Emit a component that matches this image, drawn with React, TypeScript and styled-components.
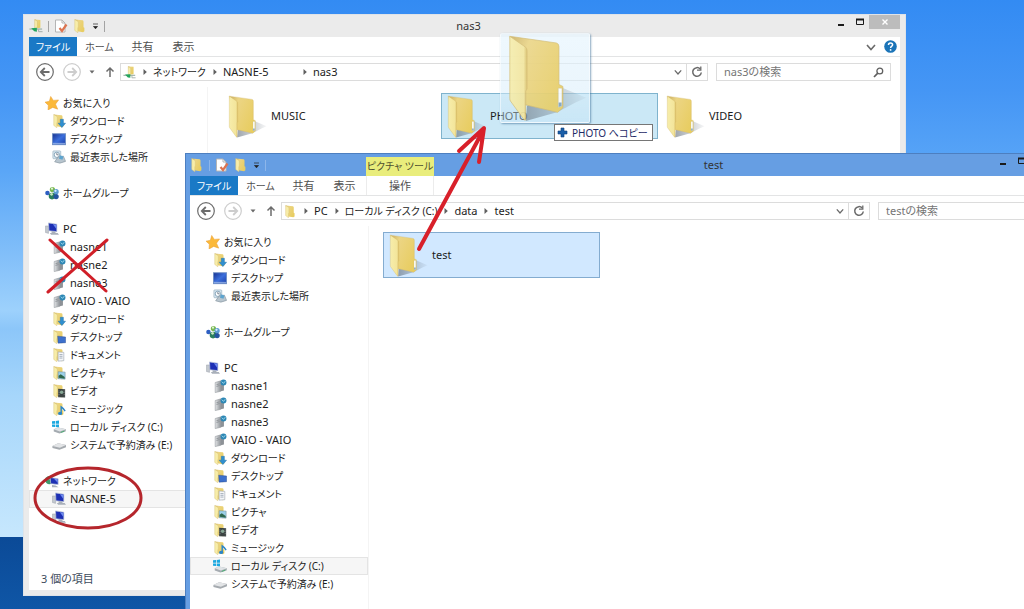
import React from "react";
import styled, { createGlobalStyle, css } from "styled-components";

const GlobalStyle = createGlobalStyle`
  * { box-sizing: border-box; }
  body {
    margin: 0;
    font-family: "Noto Sans", "Noto Sans CJK JP", sans-serif;
    font-feature-settings: "palt";
    font-size: 11px;
    line-height: 18px;
    color: #1c1c1c;
  }
  button, input {
    font: inherit;
    font-feature-settings: inherit;
    color: inherit;
    background: none;
    border: 0;
    padding: 0;
    margin: 0;
  }
`;

type Tone = "idle" | "active";

const Desktop = styled.main`
  position: relative;
  height: 100vh;
  overflow: hidden;
  background:
    linear-gradient(#0b4a97, #0f56a6) bottom / 100% 72px no-repeat,
    linear-gradient(#338bf3 0%, #4596f5 15%, #5aa6f7 28%, #82bff9 42%, #9dd1fc 51%, #8cc6f9 54%, #a6d6fb 65%, #c6e7fd 88%);
`;

const Window = styled.section<{ $tone: Tone }>`
  position: absolute;
  display: flex;
  flex-direction: column;
  ${(p) =>
    p.$tone === "active"
      ? css`
          left: 185px;
          top: 153px;
          right: -44px;
          min-height: 100%;
          background: #669ee3;
          border: 1px solid #4d7fc0;
          padding: 0 5px 5px 4px;
        `
      : css`
          left: 23px;
          top: 14px;
          right: 118px;
          background: #ebebeb;
          border: 1px solid #dfe3e8;
          padding: 0 5px 5px;
        `}
`;

const TitleBar = styled.header`
  display: flex;
  height: 22px;
`;

const QuickAccess = styled.div<{ $wide?: boolean }>`
  display: flex;
  align-items: center;
  gap: 5px;
  width: ${(p) => (p.$wide ? "176px" : "77px")};
`;

const IconButton = styled.button`
  display: grid;
  place-items: center;
  flex: none;
`;

const Rule = styled.span<{ $tone: Tone }>`
  width: 1px;
  height: 11px;
  background: ${(p) => (p.$tone === "active" ? "#8db6ea" : "#a3a3a3")};
`;

const ContextTitle = styled.div`
  width: 68px;
  margin-top: 3px;
  background: #e9ed7c;
  color: #4e5030;
  text-align: center;
  white-space: nowrap;
`;

const Title = styled.h1`
  flex: 1;
  margin: 0;
  padding-top: 2px;
  font-size: 11px;
  font-weight: 400;
  text-align: center;
  color: #333;
`;

const Controls = styled.div`
  display: flex;
  align-items: flex-start;
`;

const Control = styled.button<{ $close?: boolean; $tone: Tone }>`
  display: grid;
  place-items: center;
  width: ${(p) => (p.$close ? "31px" : "19px")};
  height: 14px;
  background: ${(p) => (p.$close ? (p.$tone === "active" ? "#c75050" : "#bcbcbc") : "none")};
`;

const Client = styled.div`
  flex: 1;
  display: flex;
  flex-direction: column;
  background: #fff;
`;

const Tabs = styled.nav`
  display: flex;
  height: 20px;
  border-bottom: 1px solid #e3e4e5;
`;

const Tab = styled.button<{ $file?: boolean; $w: number }>`
  width: ${(p) => p.$w}px;
  height: 19px;
  color: ${(p) => (p.$file ? "#fff" : "#505050")};
  background: ${(p) => (p.$file ? "#1a79c6" : "none")};
`;

const ContextTab = styled(Tab)`
  margin-left: 1px;
  border-left: 1px solid #ececec;
  border-right: 1px solid #ececec;
`;

const TabsEnd = styled.div`
  display: flex;
  align-items: center;
  gap: 8px;
  margin-left: auto;
  padding-right: 3px;
`;

const AddressRow = styled.div`
  display: flex;
  align-items: center;
  height: 30px;
  padding: 0 9px 0 6px;
`;

const NavButtons = styled.div`
  display: flex;
  align-items: center;
  width: 85px;
`;

const ForwardButton = styled(IconButton)`
  margin-left: 7px;
`;

const AddressBox = styled.div`
  flex: 1;
  display: flex;
  align-items: center;
  height: 18px;
  padding-left: 2px;
  border: 1px solid #dcdcdc;
`;

const Crumbs = styled.ol`
  flex: 1;
  display: flex;
  align-items: center;
  margin: 0;
  padding: 0;
  list-style: none;
  white-space: nowrap;
`;

const Crumb = styled.li<{ $w?: number }>`
  display: flex;
  align-items: center;
  line-height: 16px;
  ${(p) => p.$w && `min-width: ${p.$w}px;`}
  & > svg { margin: 0 5px 0 6px; flex: none; }
`;

const Refresh = styled(IconButton)`
  width: 21px;
  height: 16px;
  margin-left: 4px;
  border-left: 1px solid #dcdcdc;
`;

const SearchBox = styled.label`
  display: flex;
  align-items: center;
  width: 175px;
  height: 18px;
  margin-left: 8px;
  padding: 0 6px 0 7px;
  border: 1px solid #dcdcdc;
  & > input {
    flex: 1;
    min-width: 0;
    height: 16px;
    outline: none;
  }
  & > input::placeholder { color: #757575; opacity: 1; }
`;

const Body = styled.div`
  flex: 1;
  display: flex;
`;

const Sidebar = styled.nav`
  flex: none;
  width: 179px;
  padding: 7px 0 43px;
  border-right: 1px solid #f4f4f4;
`;

const Group = styled.ul`
  margin: 0 0 18px;
  padding: 0;
  list-style: none;
  &:last-child { margin-bottom: 0; }
`;

const Row = styled.a<{ $top?: boolean; $selected?: boolean }>`
  display: flex;
  align-items: center;
  gap: 4px;
  height: 18px;
  padding-left: ${(p) => (p.$top ? "16px" : "23px")};
  color: inherit;
  text-decoration: none;
  white-space: nowrap;
  ${(p) => p.$selected && "background: #f6f6f6; box-shadow: inset 0 0 0 1px #e4e4e4;"}
  & > svg { flex: none; }
`;

const LabelText = styled.span<{ $kana: boolean }>`
  font-size: ${(p) => (p.$kana ? "10px" : "11px")};
`;

const Files = styled.div`
  flex: 1;
  display: flex;
  align-items: flex-start;
  gap: 2px;
  padding: 6px 0 0 14px;
`;

const Tile = styled.button<{ $state?: "drop" | "selected" }>`
  display: flex;
  align-items: center;
  gap: 4px;
  width: 217px;
  height: 46px;
  padding-left: 5px;
  border: 1px solid transparent;
  color: #1c1c1c;
  ${(p) => p.$state === "drop" && "background: #cbe8f6; border-color: #7fb3cd;"}
  ${(p) => p.$state === "selected" && "background: #d1e8ff; border-color: #84acd0;"}
`;

const Status = styled.footer`
  height: 21px;
  padding-left: 12px;
  line-height: 20px;
  color: #3d4b5c;
`;

const Ghost = styled.div`
  position: absolute;
  left: 500px;
  top: 33px;
  width: 90px;
  height: 90px;
  padding-left: 6px;
  border: 1px solid rgba(255, 255, 255, 0.5);
  border-radius: 2px;
  background: linear-gradient(rgba(232, 245, 253, 0.75), rgba(200, 230, 248, 0.4));
  box-shadow: 1px 1px 2px rgba(60, 110, 150, 0.6);
  & > svg { opacity: 0.88; }
`;

const CopyTip = styled.div`
  position: absolute;
  left: 554px;
  top: 124px;
  display: flex;
  align-items: center;
  gap: 4px;
  height: 17px;
  padding: 0 4px 0 2px;
  border: 1px solid #767676;
  background: #fff;
  color: #1e2a66;
  white-space: nowrap;
`;

const Marks = styled.svg`
  position: absolute;
  left: 0;
  top: 0;
  pointer-events: none;
`;

/* Labels that contain kana are set one size smaller than Latin and kanji ones. */
function Label({ children }: { children: string }) {
  return <LabelText $kana={/[\u3041-\u30ff]/.test(children)}>{children}</LabelText>;
}

function SharedGradients() {
  return (
    <defs>
      <linearGradient id="flap" x1="0" x2="1">
        <stop offset="0" stopColor="#f7edaa" />
        <stop offset="0.8" stopColor="#f3e59b" />
        <stop offset="1" stopColor="#d9bd62" />
      </linearGradient>
      <linearGradient id="back" x1="0" x2="1" y2="0.6">
        <stop offset="0" stopColor="#c9ad60" />
        <stop offset="0.3" stopColor="#ecd584" />
        <stop offset="1" stopColor="#e8cd62" />
      </linearGradient>
      <linearGradient id="shade" x1="0" x2="1">
        <stop offset="0" stopColor="#5f6a76" stopOpacity="0.6" />
        <stop offset="1" stopColor="#5f6a76" stopOpacity="0.05" />
      </linearGradient>
      <linearGradient id="screen" x1="0" x2="1" y2="1">
        <stop offset="0" stopColor="#16308f" />
        <stop offset="0.5" stopColor="#3c6fdc" />
        <stop offset="1" stopColor="#1c3fa8" />
      </linearGradient>
      <linearGradient id="metal" x1="0" x2="1">
        <stop offset="0" stopColor="#e4e6e8" />
        <stop offset="1" stopColor="#8d9297" />
      </linearGradient>
    </defs>
  );
}

function BigFolder({ w, h }: { w: number; h: number }) {
  return (
    <svg width={w} height={h} viewBox="0 0 240 265" aria-hidden="true">
      <path d="M166 162 L238 192 L206 206 L150 236 L56 262 L60 216 Z" fill="url(#shade)" />
      <path d="M8 7 L148 27 Q156 29 156 38 V152 L168 158 V222 L152 236 L50 212 Z" fill="url(#back)" stroke="#d0b565" strokeWidth="2" />
      <path d="M154 163 H165 V217 L154 221 Z" fill="#fbfdff" stroke="#b7b08c" strokeWidth="1" />
      <path d="M155 206 H164 V217 L155 220 Z" fill="#7fa2bd" />
      <path d="M8 7 L56 40 Q60 44 60 50 V165 L56 172 V258 Q54 262 50 257 L10 202 Q8 199 8 194 Z" fill="url(#flap)" stroke="#d0b565" strokeWidth="2" />
    </svg>
  );
}

type IconKind =
  | "star" | "download" | "desktop" | "recent" | "homegroup" | "pc" | "nas"
  | "fdesktop" | "document" | "picture" | "video" | "music" | "cdrive" | "drive"
  | "network" | "folder" | "netfolder";

function SmallFolder() {
  return (
    <>
      <path d="M2 0.500 L11 1.500 Q12 1.700 12 3 V9.500 L13 10 V14 L11.500 15 L5 14 Z" fill="url(#back)" />
      <path d="M2 0.500 L6 3 V9.500 L5.500 10 V15.800 L2 13 Z" fill="#f8eda9" stroke="#d9c277" strokeWidth="0.500" />
    </>
  );
}

function Monitor() {
  return (
    <>
      <path d="M0.500 4.500 H4 V13 L0.500 12 Z" fill="#c3c8ce" stroke="#949ba5" strokeWidth="0.500" />
      <path d="M4 1 L13.500 2.500 V11 L4.500 10 Z" fill="#1d2fb4" stroke="#b9c3d8" strokeWidth="0.800" />
      <path d="M9 2.500 L13 3 V8 Z" fill="#6f8cf0" />
      <path d="M7.500 10.500 L12 11 V12.500 H14.500 L16 14.500 H7 L5.500 12.500 H7.500 Z" fill="#a9b0ba" />
    </>
  );
}

function Icon({ kind, size = 14 }: { kind: IconKind; size?: number }) {
  const art: Record<IconKind, React.ReactNode> = {
    star: <path d="M6.500 0.500 L9.500 5 L15.500 4.500 L12 9.300 L14.500 15 L8.800 13 L3.500 16 L3.800 10.500 L0 7 L5 6 Z" fill="#fbb93a" stroke="#ea9f35" strokeWidth="0.600" />,
    folder: <SmallFolder />,
    download: <><SmallFolder /><path d="M9.500 6 H13 V10.500 H15.500 L11.300 15.500 L7 10.500 H9.500 Z" fill="#2f8fd0" stroke="#1c6da6" strokeWidth="0.500" /></>,
    desktop: <><rect x="0.500" y="2" width="15" height="12.500" fill="url(#screen)" stroke="#6f8fc4" /><path d="M1 13 H15" stroke="#9db8e8" /></>,
    recent: <><rect x="1" y="1" width="9" height="9" rx="1" fill="#d5e4ef" stroke="#92a9ba" strokeWidth="0.700" /><circle cx="5.500" cy="5.500" r="3" fill="#fff" stroke="#7b9bb1" /><path d="M5.500 3.500 V5.500 H7.500" stroke="#456" fill="none" strokeWidth="0.800" /><path d="M7 8 L13 7 L15.500 13 L9 15 L3 13.500 Z" fill="#b8c5ce" stroke="#7f8e99" strokeWidth="0.700" /><path d="M9 6 L13 7.500 L12 11 L8 10 Z" fill="#5da4cf" /></>,
    homegroup: <><circle cx="2.800" cy="8" r="2.600" fill="#2d5fc2" /><circle cx="8.500" cy="4" r="3" fill="#79b850" /><circle cx="12.700" cy="6.500" r="3" fill="#5b9bd3" /><circle cx="8" cy="11.500" r="3.800" fill="#2b7f5d" /><circle cx="12.700" cy="12" r="3" fill="#24549f" /><circle cx="7.500" cy="9.500" r="1.500" fill="#c8e6c0" /><circle cx="12" cy="5.500" r="1.300" fill="#d5ebff" /><circle cx="8" cy="3" r="1.200" fill="#e2f3d8" /></>,
    pc: <Monitor />,
    nas: <><path d="M2.500 4 L9 2 V14 L2.500 15.500 Z" fill="url(#metal)" stroke="#8b9095" strokeWidth="0.600" /><path d="M9 5 L12.500 6 V13 L9 14 Z" fill="#8d9297" /><path d="M4 6.500 L7.500 5.500 M4 8.500 L7.500 7.500" stroke="#8b9095" /><circle cx="12" cy="4" r="3.400" fill="#2d87b5" /><path d="M10 3 L12 5 L14 2.500" stroke="#a8def0" fill="none" /></>,
    fdesktop: <><SmallFolder /><path d="M6.500 7 L15.500 8 V14.500 L7 15 Z" fill="#3d70cc" stroke="#23488e" strokeWidth="0.500" /></>,
    document: <><SmallFolder /><path d="M7 4.500 L13.500 5 V14.500 L7 15 Z" fill="#f4f6f9" stroke="#9ca6b3" strokeWidth="0.700" /><path d="M8.500 7.500 H12 M8.500 9.500 H12 M8.500 11.500 H12" stroke="#8793a5" strokeWidth="0.800" /></>,
    picture: <><SmallFolder /><path d="M7 6.500 L15 7 V15 L7 14.500 Z" fill="#9cd0e8" stroke="#6c8a98" strokeWidth="0.600" /><path d="M7.500 13.500 V11 L10 9.500 L14.500 12.500 V14.500 Z" fill="#30684d" /></>,
    video: <><SmallFolder /><path d="M7 5.500 L15 6 V15.500 L7 15 Z" fill="#3b4342" /><circle cx="11" cy="9.500" r="2" fill="#87a795" /><path d="M8 7.500 V14 M14 7.500 V14" stroke="#c4cccc" strokeWidth="0.600" strokeDasharray="1 1" /></>,
    music: <><SmallFolder /><path d="M10.500 13 V5.500 Q13 7 15 10.500" stroke="#2b85c9" strokeWidth="1.600" fill="none" /><ellipse cx="9.300" cy="13" rx="2.400" ry="1.900" fill="#2b85c9" /></>,
    cdrive: <><path d="M0 1.500 L3.500 1.100 V4.300 H0 Z M4.300 1 L8 0.500 V4.300 H4.300 Z M0 5 H3.500 V8 L0 7.600 Z M4.300 5 H8 V8.500 L4.300 8.100 Z" fill="#1ba8e0" /><path d="M2 10.500 L7 8.500 L16 10.500 L15.500 13 L8.500 15.500 L2 13 Z" fill="#a5abb1" /><path d="M2 10.500 L7 8.500 L16 10.500 L9 13 Z" fill="#dfe3e6" /><path d="M10 14.200 L14 12.700" stroke="#3eb06a" strokeWidth="1" /></>,
    drive: <><path d="M0.500 9 L7 6 L16 8 V10.500 L8.500 13.500 L0.500 11.500 Z" fill="#a5aaaf" /><path d="M0.500 9 L7 6 L16 8 L9 11 Z" fill="#e3e5e7" /></>,
    network: <><circle cx="5" cy="7" r="4.800" fill="#3f9a6c" /><path d="M2 5 Q5 7 8 4" stroke="#9be0d0" fill="none" /><path d="M6 4 L15 5.500 V12 L6.500 11 Z" fill="#1d2fb4" stroke="#b9c3d8" strokeWidth="0.800" /><path d="M10 5 L14.500 6 V10 Z" fill="#6f8cf0" /><path d="M8 12.500 L12 13 L15.500 15 H8 Z" fill="#a9b0ba" /></>,
    netfolder: <><path d="M6.500 0.500 L13 1 V10 L9 10.500 Z" fill="url(#back)" /><path d="M6.500 0.500 L9.500 2.500 V12 L6.500 10.500 Z" fill="#f8eda9" stroke="#d0b664" strokeWidth="0.500" /><path d="M0.500 11.500 H15" stroke="#a3b5ad" strokeWidth="1.500" /><path d="M2.500 10.500 L9 10 V14.500 L6 14 Z" fill="#23a45c" /><path d="M11 12 V14.500 H15.500" stroke="#9aa7a2" fill="none" /></>,
  };
  return (
    <svg width={size} height={size} viewBox="0 0 16 16" aria-hidden="true">
      {art[kind]}
    </svg>
  );
}

function Properties() {
  return (
    <svg width="14" height="14" viewBox="0 0 14 14" aria-hidden="true">
      <path d="M1.500 1 H8 L11 4 V13 H1.500 Z" fill="#fff" stroke="#b5b5b5" />
      <path d="M8 1 V4 H11" fill="none" stroke="#b5b5b5" />
      <path d="M5.500 9 L8 12 L12.500 5.500" fill="none" stroke="#dd7450" strokeWidth="2.200" />
    </svg>
  );
}

function Arrow({ dir, muted }: { dir: "left" | "right"; muted?: boolean }) {
  const tone = muted ? "#cdcdcd" : "#6c6c6c";
  return (
    <svg width="20" height="20" viewBox="0 0 20 20" aria-hidden="true" fill="none" stroke={tone}>
      <circle cx="10" cy="10" r="8.300" strokeWidth="1.200" />
      <path strokeWidth="1.800" d={dir === "left" ? "M14.500 10 H6 M9.800 6 L5.800 10 L9.800 14" : "M5.500 10 H14 M10.200 6 L14.200 10 L10.200 14"} />
    </svg>
  );
}

function Separator() {
  return (
    <svg width="6" height="8" viewBox="0 0 6 8" aria-hidden="true">
      <path d="M1.500 1 L4.800 4 L1.500 7 Z" fill="#606060" />
    </svg>
  );
}

function Chevron({ w }: { w: number }) {
  return (
    <svg width={w} height={w} viewBox="0 0 10 10" aria-hidden="true">
      <path d="M1 3 L5 7.500 L9 3" fill="none" stroke="#6a6a6a" strokeWidth="1.600" />
    </svg>
  );
}

interface CrumbItem { label: string; w?: number }

interface SideItem { icon: IconKind; label: string; top?: boolean; selected?: boolean }

interface ExplorerProps {
  tone: Tone;
  title: string;
  icon: IconKind;
  context?: { group: string; tab: string };
  crumbs: CrumbItem[];
  groups: SideItem[][];
  status?: string;
  children: React.ReactNode;
}

function Explorer({ tone, title, icon, context, crumbs, groups, status, children }: ExplorerProps) {
  return (
    <Window $tone={tone} aria-label={title}>
      <TitleBar>
        <QuickAccess $wide={!!context}>
          <Icon kind={icon} />
          <Rule $tone={tone} />
          <IconButton aria-label="プロパティ"><Properties /></IconButton>
          <IconButton aria-label="新しいフォルダー"><Icon kind="folder" /></IconButton>
          <IconButton aria-label="カスタマイズ">
            <svg width="7" height="7" viewBox="0 0 7 7" aria-hidden="true">
              <path d="M1 1 H6 M1.500 3.500 H5.500 L3.500 5.800 Z" fill="#222" stroke="#222" strokeWidth="0.700" />
            </svg>
          </IconButton>
          <Rule $tone={tone} />
        </QuickAccess>
        {context && <ContextTitle><Label>{context.group}</Label></ContextTitle>}
        <Title>{title}</Title>
        <Controls>
          <Control $tone={tone} aria-label="最小化">
            <svg width="6" height="10" viewBox="0 0 6 10"><path d="M0 8 H6" stroke="#1a1a1a" strokeWidth="2" /></svg>
          </Control>
          <Control $tone={tone} aria-label="最大化">
            <svg width="8" height="8" viewBox="0 0 8 8"><path d="M0.500 1 V6.500 H7.500 V1" fill="none" stroke="#1a1a1a" /><path d="M0 1.500 H8" stroke="#1a1a1a" strokeWidth="2" /></svg>
          </Control>
          <Control $tone={tone} $close aria-label="閉じる">
            <svg width="6" height="6" viewBox="0 0 6 6"><path d="M0.500 0.500 L5.500 5.500 M5.500 0.500 L0.500 5.500" stroke="#fff" strokeWidth="1.400" /></svg>
          </Control>
        </Controls>
      </TitleBar>
      <Client>
        <Tabs>
          <Tab $file $w={48}><Label>ファイル</Label></Tab>
          <Tab $w={45}><Label>ホーム</Label></Tab>
          <Tab $w={41}>共有</Tab>
          <Tab $w={41}>表示</Tab>
          {context && <ContextTab $w={68}>{context.tab}</ContextTab>}
          <TabsEnd>
            <IconButton aria-label="リボンの展開"><Chevron w={10} /></IconButton>
            <IconButton aria-label="ヘルプ">
              <svg width="13" height="13" viewBox="0 0 13 13">
                <circle cx="6.500" cy="6.500" r="6.300" fill="#1b74b8" />
                <path d="M4.500 5 Q4.500 3 6.500 3 Q8.600 3 8.600 4.800 Q8.600 5.800 7.500 6.400 Q6.600 7 6.600 8" fill="none" stroke="#fff" strokeWidth="1.500" />
                <circle cx="6.600" cy="9.900" r="0.900" fill="#fff" />
              </svg>
            </IconButton>
          </TabsEnd>
        </Tabs>
        <AddressRow>
          <NavButtons>
            <IconButton aria-label="戻る"><Arrow dir="left" /></IconButton>
            <ForwardButton aria-label="進む"><Arrow dir="right" muted /></ForwardButton>
            <IconButton aria-label="履歴">
              <svg width="20" height="8" viewBox="0 0 20 8"><path d="M7.500 2.500 H12.500 L10 5.500 Z" fill="#6a6a6a" /></svg>
            </IconButton>
            <IconButton aria-label="上へ">
              <svg width="16" height="12" viewBox="0 0 16 12"><path d="M8 11 V2 M4.500 5.500 L8 2 L11.500 5.500" fill="none" stroke="#6c6c6c" strokeWidth="1.500" /></svg>
            </IconButton>
          </NavButtons>
          <AddressBox>
            <Icon kind={icon} size={13} />
            <Crumbs>
              {crumbs.map((c) => (
                <Crumb key={c.label} $w={c.w}>
                  <Separator />
                  <button><Label>{c.label}</Label></button>
                </Crumb>
              ))}
            </Crumbs>
            <IconButton aria-label="以前の場所"><Chevron w={8} /></IconButton>
            <Refresh aria-label="最新の情報に更新">
              <svg width="12" height="12" viewBox="0 0 12 12">
                <path d="M9.200 3 A4.300 4.300 0 1 0 10.300 6.500" fill="none" stroke="#6a6a6a" strokeWidth="1.500" />
                <path d="M9.800 0.500 V4.200 H6" fill="none" stroke="#6a6a6a" strokeWidth="1.300" />
              </svg>
            </Refresh>
          </AddressBox>
          <SearchBox>
            <input type="text" aria-label={`${title}の検索`} placeholder={`${title}の検索`} />
            <svg width="11" height="11" viewBox="0 0 11 11" aria-hidden="true">
              <circle cx="6.800" cy="4" r="2.900" fill="none" stroke="#5f5f5f" strokeWidth="1.300" />
              <path d="M4.800 6.200 L1 10" stroke="#5f5f5f" strokeWidth="1.700" />
            </svg>
          </SearchBox>
        </AddressRow>
        <Body>
          <Sidebar>
            {groups.map((g, i) => (
              <Group key={i}>
                {g.map((it, j) => (
                  <li key={j}>
                    <Row href="#" $top={it.top} $selected={it.selected} aria-label={it.label || "コンピューター"}>
                      <Icon kind={it.icon} />
                      <Label>{it.label}</Label>
                    </Row>
                  </li>
                ))}
              </Group>
            ))}
          </Sidebar>
          <Files>{children}</Files>
        </Body>
        {status && <Status>{status}</Status>}
      </Client>
    </Window>
  );
}

function placeGroups(selected?: string): SideItem[][] {
  const pc: SideItem[] = [
    { icon: "pc", label: "PC", top: true },
    { icon: "nas", label: "nasne1" },
    { icon: "nas", label: "nasne2" },
    { icon: "nas", label: "nasne3" },
    { icon: "nas", label: "VAIO - VAIO" },
    { icon: "download", label: "ダウンロード" },
    { icon: "fdesktop", label: "デスクトップ" },
    { icon: "document", label: "ドキュメント" },
    { icon: "picture", label: "ピクチャ" },
    { icon: "video", label: "ビデオ" },
    { icon: "music", label: "ミュージック" },
    { icon: "cdrive", label: "ローカル ディスク (C:)" },
    { icon: "drive", label: "システムで予約済み (E:)" },
  ];
  return [
    [
      { icon: "star", label: "お気に入り", top: true },
      { icon: "download", label: "ダウンロード" },
      { icon: "desktop", label: "デスクトップ" },
      { icon: "recent", label: "最近表示した場所" },
    ],
    [{ icon: "homegroup", label: "ホームグループ", top: true }],
    pc.map((it) => ({ ...it, selected: it.label === selected })),
  ];
}

const networkGroup: SideItem[] = [
  { icon: "network", label: "ネットワーク", top: true },
  { icon: "pc", label: "NASNE-5", selected: true },
  { icon: "pc", label: "" },
];

function FolderTile({ name, state }: { name: string; state?: "drop" | "selected" }) {
  return (
    <Tile $state={state}>
      <BigFolder w={39} h={43} />
      {name}
    </Tile>
  );
}

export default function App() {
  return (
    <Desktop>
      <GlobalStyle />
      <Explorer
        tone="idle"
        title="nas3"
        icon="netfolder"
        crumbs={[{ label: "ネットワーク" }, { label: "NASNE-5", w: 90 }, { label: "nas3" }]}
        groups={[...placeGroups(), networkGroup]}
        status="3 個の項目"
      >
        <FolderTile name="MUSIC" />
        <FolderTile name="PHOTO" state="drop" />
        <FolderTile name="VIDEO" />
      </Explorer>
      <Explorer
        tone="active"
        title="test"
        icon="folder"
        context={{ group: "ピクチャ ツール", tab: "操作" }}
        crumbs={[{ label: "PC" }, { label: "ローカル ディスク (C:)" }, { label: "data" }, { label: "test" }]}
        groups={placeGroups("ローカル ディスク (C:)")}
      >
        <FolderTile name="test" state="selected" />
      </Explorer>
      <Ghost>
        <BigFolder w={80} h={88} />
      </Ghost>
      <CopyTip>
        <svg width="11" height="11" viewBox="0 0 11 11" aria-hidden="true">
          <path d="M4 1 H7 V4 H10 V7 H7 V10 H4 V7 H1 V4 H4 Z" fill="#1b5fa8" stroke="#0f3f7c" strokeWidth="0.600" />
        </svg>
        <Label>PHOTO へコピー</Label>
      </CopyTip>
      <Marks width="600" height="560" viewBox="0 0 600 560" fill="none" strokeLinecap="round" aria-hidden="true">
        <SharedGradients />
        <path d="M419 249 L484 129 M459 151 L484 128 L479 162" stroke="#d8202a" strokeWidth="4" strokeLinejoin="round" />
        <path d="M50 240 L106 291 M107 240 L48 292" stroke="#d01f28" strokeWidth="3" />
        <ellipse cx="88" cy="498" rx="53" ry="30" stroke="#b5262c" strokeWidth="3" />
      </Marks>
    </Desktop>
  );
}
